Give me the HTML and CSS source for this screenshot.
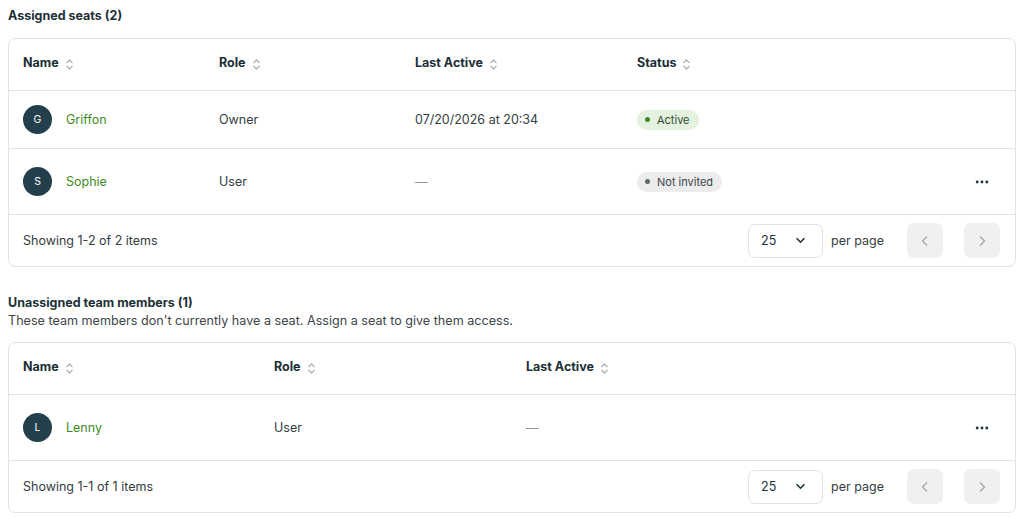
FILE: index.html
```html
<!DOCTYPE html>
<html>
<head>
<meta charset="utf-8">
<link rel="stylesheet" href="styles.css">
</head>
<body>
<section class="section">
  <h2 class="title">Assigned seats (2)</h2>
  <div class="card">
    <div class="row head cols-a">
      <div class="th">Name <svg class="sort" viewBox="0 0 9 13"><path d="M1.5 5 4.5 2l3 3M1.5 8l3 3 3-3"/></svg></div>
      <div class="th">Role <svg class="sort" viewBox="0 0 9 13"><path d="M1.5 5 4.5 2l3 3M1.5 8l3 3 3-3"/></svg></div>
      <div class="th">Last Active <svg class="sort" viewBox="0 0 9 13"><path d="M1.5 5 4.5 2l3 3M1.5 8l3 3 3-3"/></svg></div>
      <div class="th">Status <svg class="sort" viewBox="0 0 9 13"><path d="M1.5 5 4.5 2l3 3M1.5 8l3 3 3-3"/></svg></div>
      <div></div>
    </div>
    <div class="row body cols-a">
      <div class="user"><span class="avatar">G</span><span class="uname">Griffon</span></div>
      <div>Owner</div>
      <div>07/20/2026 at 20:34</div>
      <div><span class="badge active"><i></i>Active</span></div>
      <div></div>
    </div>
    <div class="row body cols-a">
      <div class="user"><span class="avatar">S</span><span class="uname">Sophie</span></div>
      <div>User</div>
      <div class="dash">—</div>
      <div><span class="badge gray"><i></i>Not invited</span></div>
      <div class="act"><button class="more"><svg viewBox="0 0 16 4"><circle cx="2.5" cy="2" r="1.6"/><circle cx="8" cy="2" r="1.6"/><circle cx="13.5" cy="2" r="1.6"/></svg></button></div>
    </div>
    <div class="foot">
      <div>Showing 1-2 of 2 items</div>
      <div class="pager">
        <div class="select">25 <svg viewBox="0 0 12 8"><path d="M1.5 1.5 6 6l4.5-4.5"/></svg></div>
        <span class="pp">per page</span>
        <button class="nav"><svg viewBox="0 0 8 12"><path d="M6 1.5 1.5 6 6 10.5"/></svg></button>
        <button class="nav"><svg viewBox="0 0 8 12"><path d="M2 1.5 6.5 6 2 10.5"/></svg></button>
      </div>
    </div>
  </div>
</section>

<section class="section second">
  <h2 class="title">Unassigned team members (1)</h2>
  <p class="sub">These team members don't currently have a seat. Assign a seat to give them access.</p>
  <div class="card">
    <div class="row head cols-b">
      <div class="th">Name <svg class="sort" viewBox="0 0 9 13"><path d="M1.5 5 4.5 2l3 3M1.5 8l3 3 3-3"/></svg></div>
      <div class="th">Role <svg class="sort" viewBox="0 0 9 13"><path d="M1.5 5 4.5 2l3 3M1.5 8l3 3 3-3"/></svg></div>
      <div class="th">Last Active <svg class="sort" viewBox="0 0 9 13"><path d="M1.5 5 4.5 2l3 3M1.5 8l3 3 3-3"/></svg></div>
      <div></div>
    </div>
    <div class="row body cols-b">
      <div class="user"><span class="avatar">L</span><span class="uname">Lenny</span></div>
      <div>User</div>
      <div class="dash">—</div>
      <div class="act"><button class="more"><svg viewBox="0 0 16 4"><circle cx="2.5" cy="2" r="1.6"/><circle cx="8" cy="2" r="1.6"/><circle cx="13.5" cy="2" r="1.6"/></svg></button></div>
    </div>
    <div class="foot">
      <div>Showing 1-1 of 1 items</div>
      <div class="pager">
        <div class="select">25 <svg viewBox="0 0 12 8"><path d="M1.5 1.5 6 6l4.5-4.5"/></svg></div>
        <span class="pp">per page</span>
        <button class="nav"><svg viewBox="0 0 8 12"><path d="M6 1.5 1.5 6 6 10.5"/></svg></button>
        <button class="nav"><svg viewBox="0 0 8 12"><path d="M2 1.5 6.5 6 2 10.5"/></svg></button>
      </div>
    </div>
  </div>
</section>
</body>
</html>
```
FILE: styles.css
```css
* { box-sizing: border-box; }
body {
  margin: 0;
  padding: 8px;
  font-family: Inter, "Noto Sans", sans-serif;
  font-size: 12.5px;
  line-height: 16px;
  color: #333d40;
  background: #fff;
}
.title {
  margin: 0;
  font-size: 12.5px;
  font-weight: 700;
  color: #1d3138;
  line-height: 16px;
}
.sub {
  margin: 2px 0 0;
  line-height: 16px;
  font-size: 12.6px;
  color: #3c4649;
}
.section .card { margin-top: 14px; }
.second { margin-top: 28px; }
.second .card { margin-top: 13px; }
.card {
  border: 1px solid #e1e3e3;
  border-radius: 7px;
  background: #fff;
}
.row {
  display: grid;
  align-items: center;
  padding: 0 14px;
  border-bottom: 1px solid #e1e3e3;
}
.cols-a { grid-template-columns: 196px 196px 222px 1fr 40px; }
.cols-b { grid-template-columns: 251px 252px 1fr 40px; }
.head { height: 52px; padding-bottom: 3px; }
.th {
  font-weight: 700;
  color: #1b2f36;
  display: flex;
  align-items: center;
  gap: 6px;
}
.sort { width: 9px; height: 13px; fill: none; stroke: #aeb3b4; stroke-width: 1.4; margin-top: 3px; }
.body { padding-top: 14px; padding-bottom: 14px; }
.user { display: flex; align-items: center; gap: 14px; }
.avatar {
  width: 29px; height: 29px; border-radius: 50%;
  background: #233f4b; color: #fff;
  display: flex; align-items: center; justify-content: center;
  font-size: 10.5px;
}
.uname { color: #3f8a24; }
.dash { color: #8a9394; }
.badge {
  display: inline-flex; align-items: center; gap: 7px;
  height: 20px; padding: 0 9px 0 8px; border-radius: 10px;
  font-size: 11px;
}
.badge i { width: 5px; height: 5px; border-radius: 50%; display: block; }
.badge.active { background: #e5f1df; color: #2e4a2e; }
.badge.active i { background: #3f8a24; }
.badge.gray { background: #ececec; color: #3a4448; }
.badge.gray i { background: #5e6a6d; }
.act { display: flex; justify-content: flex-end; }
.more {
  border: 0; background: transparent; padding: 0;
  width: 37px; height: 37px;
  display: flex; align-items: center; justify-content: center;
  margin-right: 1px;
}
.more svg { width: 14px; height: 4px; fill: #1d3138; }
.foot {
  height: 51px;
  display: flex; align-items: center; justify-content: space-between;
  padding: 0 15px 0 14px;
}
.pager { display: flex; align-items: center; }
.select {
  width: 75px; height: 34px;
  border: 1px solid #dfe2e2; border-radius: 7px;
  display: flex; align-items: center; justify-content: space-between;
  padding: 0 16px 0 12px;
  color: #1d3138;
}
.select svg { width: 11px; height: 7px; fill: none; stroke: #1d3138; stroke-width: 1.8; }
.pp { margin-left: 8px; margin-right: 23px; }
.nav {
  width: 36px; height: 35px; border: 0; border-radius: 7px;
  background: #f0f0f0; display: flex; align-items: center; justify-content: center;
  padding: 0;
}
.nav + .nav { margin-left: 21px; }
.nav svg { width: 8px; height: 12px; fill: none; stroke: #a3a8a9; stroke-width: 1.4; }
```
